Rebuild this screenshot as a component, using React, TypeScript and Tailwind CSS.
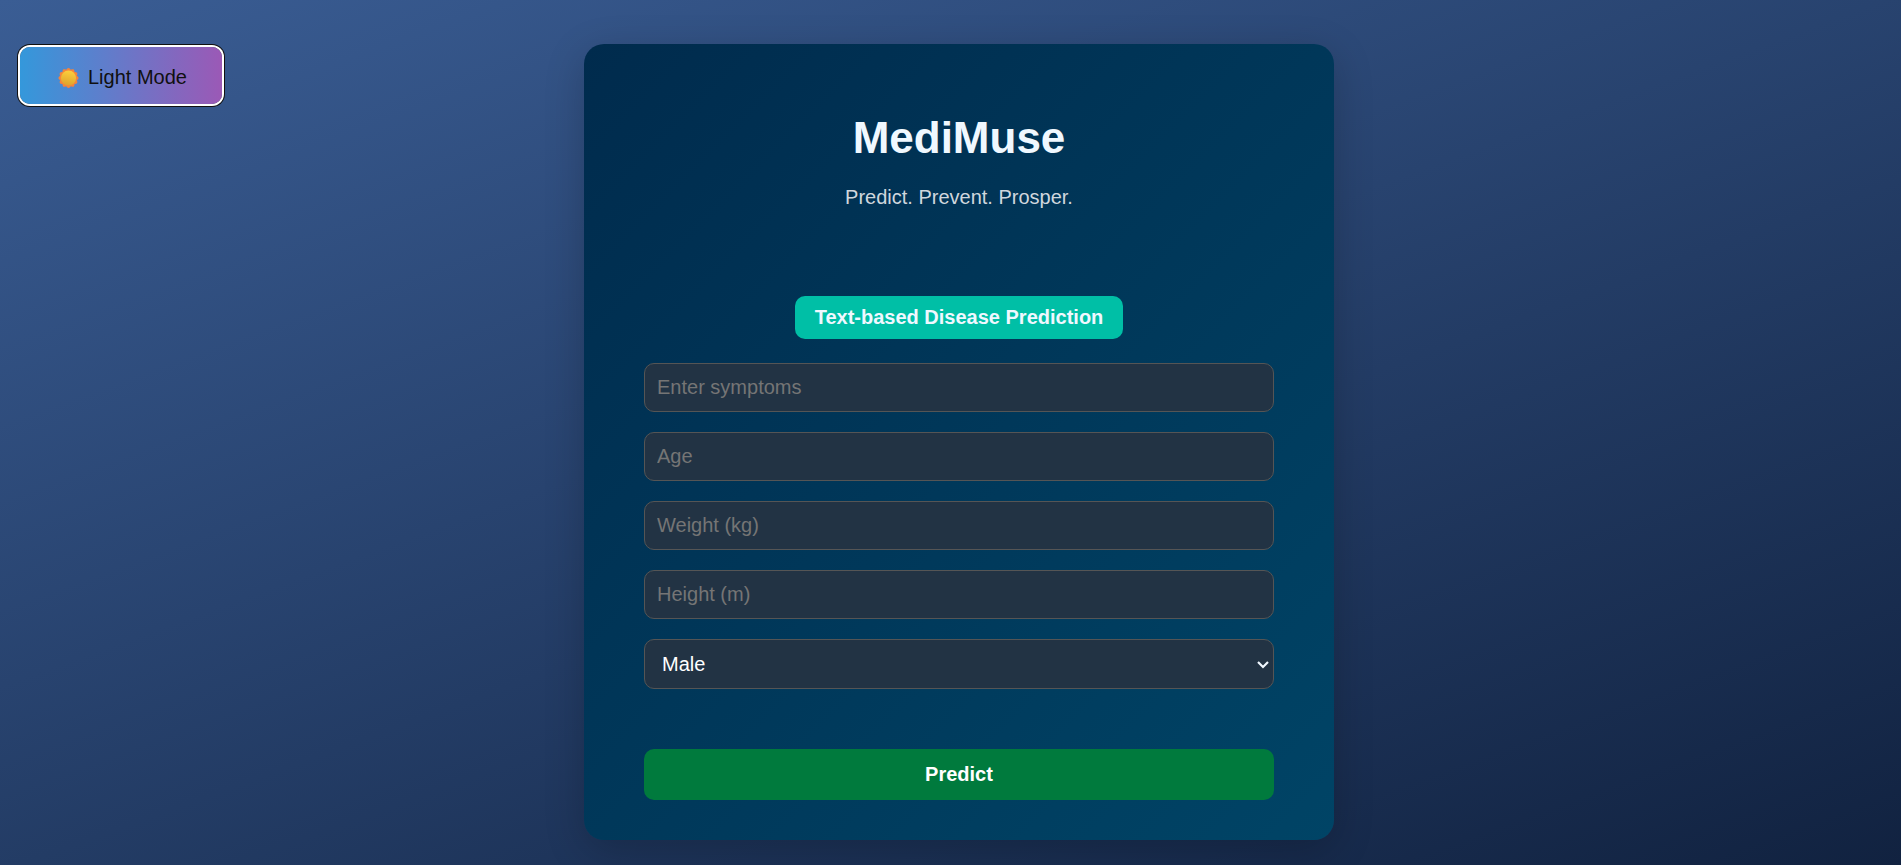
import { useState } from "react";

const fields = [
  { id: "symptoms", label: "Enter symptoms" },
  { id: "age", label: "Age" },
  { id: "weight", label: "Weight (kg)" },
  { id: "height", label: "Height (m)" },
];

const fieldClass =
  "w-full rounded-[10px] border border-[#555555] bg-[#223344] text-xl text-white outline-none placeholder:text-[#757575]";

function Sun() {
  const points = Array.from({ length: 96 }, (_, i) => {
    const angle = (i / 96) * Math.PI * 2;
    const radius = 8.5 + 1.5 * Math.abs(Math.cos(angle * 6));
    return `${10 + radius * Math.cos(angle)},${10 + radius * Math.sin(angle)}`;
  }).join(" ");
  return (
    <svg className="h-5 w-[27px]" viewBox="0 0 20 20" aria-hidden="true">
      <defs>
        <linearGradient id="sun-core" x1="0.6" y1="0" x2="0.4" y2="1">
          <stop offset="0" stopColor="#fdd03c" />
          <stop offset="1" stopColor="#dfa22c" />
        </linearGradient>
      </defs>
      <polygon points={points} fill="#f5843a" />
      <circle cx="10" cy="10" r="7.6" fill="url(#sun-core)" />
    </svg>
  );
}

export default function App() {
  const [gender, setGender] = useState("Male");
  return (
    <div className="relative flex min-h-screen items-start justify-center bg-linear-[160deg,#3a5d94,#112240] pt-11 pb-6 pl-[17px] font-['Liberation_Sans',Arial,sans-serif]">
      <button
        type="button"
        className="absolute top-[47px] left-5 flex items-center gap-1.5 rounded-[10px] bg-[linear-gradient(to_right,#3498db,#9b59b6)] px-[35px] pt-[17px] pb-[13px] text-xl leading-[27px] text-[#101010] shadow-[0_0_0_2px_#ffffff,0_0_0_3px_#101010]"
      >
        <Sun />
        Light Mode
      </button>

      <main className="w-full max-w-[750px] rounded-[20px] bg-linear-[135deg,#002b4d,#004466] px-[60px] pt-[60px] pb-10 shadow-[0_10px_40px_rgba(0,0,0,0.2)]">
        <header className="text-center">
          <h1 className="pt-2 text-[44px] leading-[52px] font-bold text-[#f0f8ff]">MediMuse</h1>
          <p className="mt-[21px] text-xl leading-6 text-[#d0d7de]">Predict. Prevent. Prosper.</p>
        </header>

        <form className="mt-[87px]" onSubmit={(e) => e.preventDefault()}>
          <div className="mb-6 flex justify-center">
            <h2 className="rounded-[10px] bg-[#00bfa6] px-5 py-[10px] text-xl leading-[23px] font-bold text-[#f0f8ff]">
              Text-based Disease Prediction
            </h2>
          </div>
          <div className="flex flex-col gap-5">
            {fields.map((f) => (
              <input
                key={f.id}
                id={f.id}
                type="text"
                aria-label={f.label}
                placeholder={f.label}
                className={`${fieldClass} h-[49px] px-3`}
              />
            ))}
            <div className="relative">
              <select
                id="gender"
                aria-label="Gender"
                value={gender}
                onChange={(e) => setGender(e.target.value)}
                className={`${fieldClass} block h-[50px] appearance-none pl-[17px]`}
              >
                <option>Male</option>
                <option>Female</option>
              </select>
              <svg
                className="pointer-events-none absolute inset-y-0 right-1 my-auto h-3 w-[14px]"
                viewBox="0 0 14 12"
                fill="none"
                stroke="#f0f8ff"
                strokeWidth="2.2"
                aria-hidden="true"
              >
                <path d="M2 4 L7 9 L12 4" />
              </svg>
            </div>
          </div>
          <button
            type="submit"
            className="mt-[60px] h-[51px] w-full rounded-[10px] bg-[#007a3d] pb-0.5 text-xl font-bold text-white"
          >
            Predict
          </button>
        </form>
      </main>
    </div>
  );
}
